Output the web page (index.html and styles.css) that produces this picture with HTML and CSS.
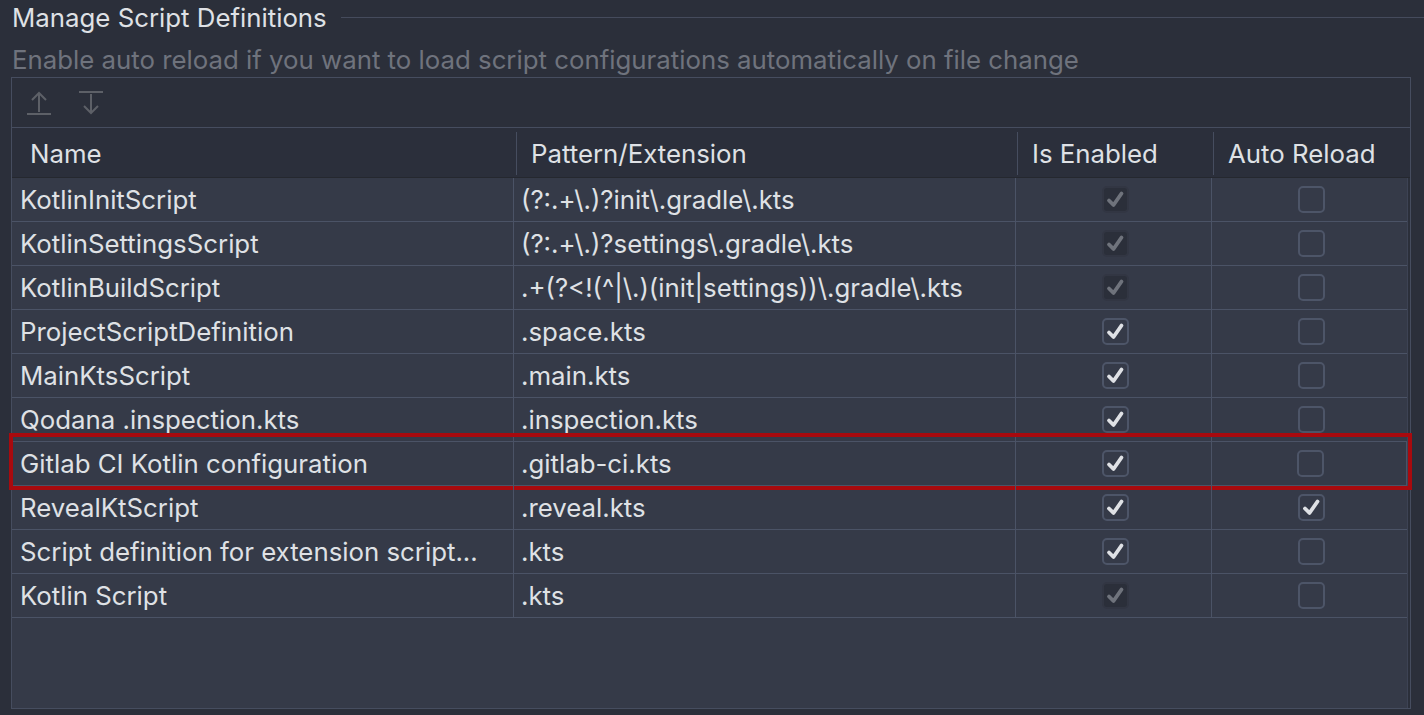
FILE: index.html
```html
<!DOCTYPE html>
<html>
<head>
<meta charset="utf-8">
<link rel="stylesheet" href="styles.css">
</head>
<body>
<div class="title-row">
  <span class="title">Manage Script Definitions</span>
  <span class="title-line"></span>
</div>
<div class="subtitle">Enable auto reload if you want to load script configurations automatically on file change</div>
<div class="panel">
  <div class="toolbar">
    <svg class="tool" width="24" height="24" viewBox="0 0 24 24"><path d="M0 23H24M12 21V2M5 9L12 2L19 9" fill="none" stroke="#5d6067" stroke-width="2"/></svg>
    <svg class="tool" width="24" height="24" viewBox="0 0 24 24"><path d="M0 1H24M12 3V22M5 15L12 22L19 15" fill="none" stroke="#5d6067" stroke-width="2"/></svg>
  </div>
  <div class="thead">
    <div class="hcell first">Name</div>
    <div class="hcell">Pattern/Extension</div>
    <div class="hcell">Is Enabled</div>
    <div class="hcell">Auto Reload</div>
  </div>
  <div class="tbody">
    <div class="row"><div class="cell name">KotlinInitScript</div><div class="cell pat">(?:.+\.)?init\.gradle\.kts</div><div class="cell chk"><span class="cb dis on"></span></div><div class="cell chk"><span class="cb"></span></div></div>
    <div class="row"><div class="cell name">KotlinSettingsScript</div><div class="cell pat">(?:.+\.)?settings\.gradle\.kts</div><div class="cell chk"><span class="cb dis on"></span></div><div class="cell chk"><span class="cb"></span></div></div>
    <div class="row"><div class="cell name">KotlinBuildScript</div><div class="cell pat">.+(?&lt;!(^|\.)(init|settings))\.gradle\.kts</div><div class="cell chk"><span class="cb dis on"></span></div><div class="cell chk"><span class="cb"></span></div></div>
    <div class="row"><div class="cell name">ProjectScriptDefinition</div><div class="cell pat">.space.kts</div><div class="cell chk"><span class="cb on"></span></div><div class="cell chk"><span class="cb"></span></div></div>
    <div class="row"><div class="cell name">MainKtsScript</div><div class="cell pat">.main.kts</div><div class="cell chk"><span class="cb on"></span></div><div class="cell chk"><span class="cb"></span></div></div>
    <div class="row"><div class="cell name">Qodana .inspection.kts</div><div class="cell pat">.inspection.kts</div><div class="cell chk"><span class="cb on"></span></div><div class="cell chk"><span class="cb"></span></div></div>
    <div class="row marked"><div class="cell name">Gitlab CI Kotlin configuration</div><div class="cell pat">.gitlab-ci.kts</div><div class="cell chk"><span class="cb on"></span></div><div class="cell chk"><span class="cb"></span></div><span class="highlight"></span></div>
    <div class="row"><div class="cell name">RevealKtScript</div><div class="cell pat">.reveal.kts</div><div class="cell chk"><span class="cb on"></span></div><div class="cell chk"><span class="cb on"></span></div></div>
    <div class="row"><div class="cell name">Script definition for extension script...</div><div class="cell pat">.kts</div><div class="cell chk"><span class="cb on"></span></div><div class="cell chk"><span class="cb"></span></div></div>
    <div class="row"><div class="cell name">Kotlin Script</div><div class="cell pat">.kts</div><div class="cell chk"><span class="cb dis on"></span></div><div class="cell chk"><span class="cb"></span></div></div>
  </div>
</div>
</body>
</html>
```
FILE: styles.css
```css
html, body {
  margin: 0;
  padding: 0;
}
body {
  width: 1424px;
  height: 715px;
  overflow: hidden;
  background: #2b2f3a;
  color: #dfe1e5;
  font-family: Inter, "Noto Sans", sans-serif;
  font-size: 25.8px;
}
.title-row {
  display: flex;
  align-items: center;
  gap: 14px;
  height: 35px;
  padding-left: 12px;
}
.title {
  color: #dfe1e5;
  white-space: nowrap;
}
.title-line {
  flex: 1;
  height: 1px;
  background: #454b5c;
}
.subtitle {
  height: 42px;
  line-height: 50px;
  padding-left: 12px;
  color: #6f737d;
  white-space: nowrap;
}
.panel {
  margin-left: 11px;
  width: 1398px;
  height: 630px;
  border: 1px solid #464d5f;
  display: flex;
  flex-direction: column;
}
.toolbar {
  height: 49px;
  flex: none;
  display: flex;
  align-items: center;
  gap: 28px;
  padding-left: 15px;
  border-bottom: 1px solid #464d5f;
}
.tool {
  display: block;
}
.thead {
  flex: none;
  display: grid;
  grid-template-columns: 504px 501px 196px 195px;
  height: 43px;
  padding: 4px 0 2px;
  border-bottom: 1px solid #25282f;
  background: #2b2f3b;
}
.hcell {
  display: flex;
  align-items: center;
  padding-left: 14px;
  border-left: 1px solid #464d5f;
  white-space: nowrap;
}
.hcell.first {
  border-left: none;
  padding-left: 18px;
}
.tbody {
  flex: 1;
  background: #353a48;
  margin-right: 2px;
  border-right: 1px solid #3d4354;
}
.row {
  position: relative;
  display: grid;
  grid-template-columns: 502px 502px 196px 1fr;
  height: 43px;
  border-bottom: 1px solid #4b5366;
}
.cell {
  display: flex;
  align-items: center;
  white-space: nowrap;
  overflow: hidden;
  border-right: 1px solid #4b5366;
}
.cell:last-child {
  border-right: none;
}
.name {
  padding-left: 8px;
}
.pat {
  padding-left: 7px;
}
.chk {
  justify-content: center;
  padding-left: 3px;
}
.cb {
  display: block;
  width: 23px;
  height: 23px;
  border: 2px solid #4d5568;
  border-radius: 5px;
  background-repeat: no-repeat;
  background-position: center;
}
.cb.on {
  background-image: url("data:image/svg+xml;utf8,<svg xmlns='http://www.w3.org/2000/svg' width='23' height='23' viewBox='0 0 23 23'><path d='M5 12.5L9.5 17L17.5 5.5' fill='none' stroke='%23dfe1e5' stroke-width='3.8' stroke-linecap='round' stroke-linejoin='round'/></svg>");
}
.cb.dis {
  border-color: #323643;
  background-color: #2b2f3a;
}
.cb.dis.on {
  background-image: url("data:image/svg+xml;utf8,<svg xmlns='http://www.w3.org/2000/svg' width='23' height='23' viewBox='0 0 23 23'><path d='M5 12.5L9.5 17L17.5 5.5' fill='none' stroke='%236f737c' stroke-width='3.8' stroke-linecap='round' stroke-linejoin='round'/></svg>");
}
.highlight {
  position: absolute;
  left: -3px;
  right: -5px;
  top: -9px;
  bottom: -5px;
  border: 4px solid #a80a0e;
  pointer-events: none;
}
```
